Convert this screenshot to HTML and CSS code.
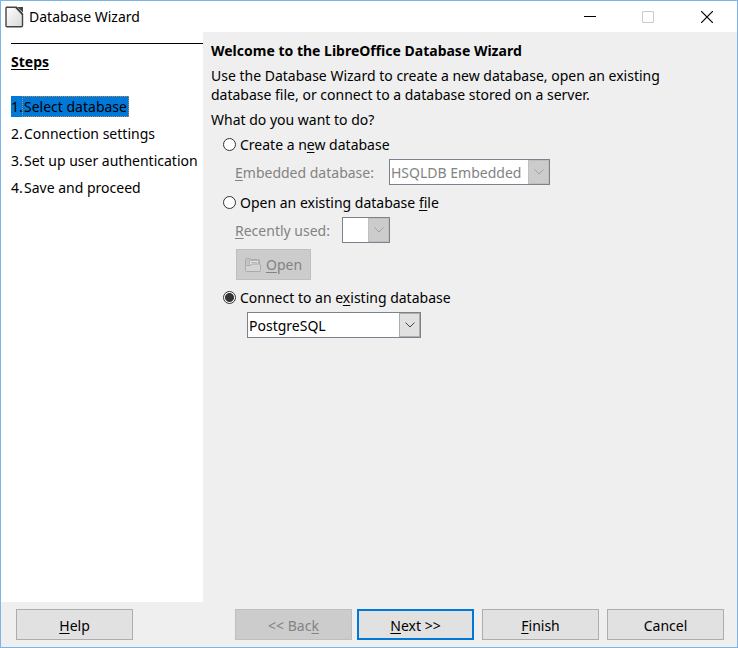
FILE: index.html
```html
<!DOCTYPE html>
<html lang="en">
<head>
<meta charset="utf-8">
<title>Database Wizard</title>
<link rel="stylesheet" href="styles.css">
</head>
<body>
<div class="window">
  <header class="titlebar">
    <svg class="app-icon" width="20" height="22" viewBox="0 0 20 22" aria-hidden="true">
      <defs><linearGradient id="page" x1="0" y1="0" x2="1" y2="1"><stop offset="0" stop-color="#fff"/><stop offset="1" stop-color="#d8d8d8"/></linearGradient></defs>
      <path d="M1.800 1.200h9.700l6 6.800v11.700q0 1-1 1H2q-1 0-1-1V2q0-.8.8-.8z" fill="url(#page)" stroke="#444" stroke-width="1.400"/>
      <path d="M12.500 1H18v5.500z" fill="#444"/>
      <path d="M11 1.500l6.500 7" stroke="#444" stroke-width="1.800"/>
    </svg>
    <h1 class="title">Database Wizard</h1>
    <button class="caption" type="button" aria-label="Minimize"><svg width="12" height="12" viewBox="0 0 12 12"><path d="M0 5.500h12" stroke="#000"/></svg></button>
    <button class="caption" type="button" aria-label="Maximize" disabled><svg width="12" height="12" viewBox="0 0 12 12"><path d="M.5.5h11v11H.5z" fill="none" stroke="#ccc"/></svg></button>
    <button class="caption" type="button" aria-label="Close"><svg width="12" height="12" viewBox="0 0 12 12"><path d="M0 0l12 12M12 0L0 12" stroke="#000" stroke-width="1.200"/></svg></button>
  </header>

  <div class="body">
    <nav class="sidebar" aria-labelledby="steps-title">
      <h2 class="steps-title" id="steps-title">Steps</h2>
      <ol class="steps">
        <li><a class="step current" href="#select" aria-current="step"><span class="number">1.</span><span class="name">Select database</span></a></li>
        <li><a class="step" href="#connection"><span class="number">2.</span><span class="name">Connection settings</span></a></li>
        <li><a class="step" href="#authentication"><span class="number">3.</span><span class="name">Set up user authentication</span></a></li>
        <li><a class="step" href="#save"><span class="number">4.</span><span class="name">Save and proceed</span></a></li>
      </ol>
    </nav>

    <main class="content">
      <h2 class="heading">Welcome to the LibreOffice Database Wizard</h2>
      <p class="intro">Use the Database Wizard to create a new database, open an existing database file, or connect to a database stored on a server.</p>
      <p class="question" id="question">What do you want to do?</p>
      <div class="options" role="radiogroup" aria-labelledby="question">
        <section class="option">
          <label class="choice"><input type="radio" name="mode"><span>Create a n<u>e</u>w database</span></label>
          <div class="field">
            <label class="muted embedded-label" for="embedded"><u>E</u>mbedded database:</label>
            <span class="combo combo-embedded disabled">
              <select id="embedded" disabled><option>HSQLDB Embedded</option></select>
              <span class="arrow"><svg width="10" height="6" viewBox="0 0 10 6"><path d="M.5.5L5 5 9.500.5"/></svg></span>
            </span>
          </div>
        </section>
        <section class="option">
          <label class="choice"><input type="radio" name="mode"><span>Open an existing database <u>f</u>ile</span></label>
          <div class="field">
            <label class="muted recent-label" for="recent"><u>R</u>ecently used:</label>
            <span class="combo combo-recent disabled">
              <select id="recent" disabled><option></option></select>
              <span class="arrow"><svg width="10" height="6" viewBox="0 0 10 6"><path d="M.5.5L5 5 9.500.5"/></svg></span>
            </span>
          </div>
          <button class="button open" type="button" disabled>
            <svg width="16" height="16" viewBox="0 0 16 16" fill="none" stroke="#aaa" aria-hidden="true">
              <path d="M.5 13V2.500q0-1 1-1h3q1 0 1 1h8q1 0 1 1V8" fill="#c4c4c4"/>
              <path d="M4.500 8.500V3.500h9V8" fill="#e2e2e2" stroke="#b4b4b4"/>
              <path d="M6 5.500h6" stroke="#b4b4b4"/>
              <path d="M1.500 8.500h4l1.500-1.500h7.500q1 0 1 1v5.500q0 1-1 1h-13q-1 0-1-1v-4q0-1 1-1z" fill="#d4d4d4"/>
            </svg>
            <span><u>O</u>pen</span>
          </button>
        </section>
        <section class="option">
          <label class="choice"><input type="radio" name="mode" checked><span>Connect to an e<u>x</u>isting database</span></label>
          <div class="field indented">
            <span class="combo combo-type">
              <select id="type" aria-label="Database type"><option>PostgreSQL</option></select>
              <span class="arrow"><svg width="10" height="6" viewBox="0 0 10 6"><path d="M.5.5L5 5 9.500.5"/></svg></span>
            </span>
          </div>
        </section>
      </div>
    </main>
  </div>

  <footer class="footer">
    <button class="button help" type="button"><span><u>H</u>elp</span></button>
    <div class="pair">
      <button class="button" type="button" disabled><span>&lt;&lt; Bac<u>k</u></span></button>
      <button class="button default" type="button"><span><u>N</u>ext &gt;&gt;</span></button>
    </div>
    <button class="button" type="button"><span><u>F</u>inish</span></button>
    <button class="button" type="button"><span>Cancel</span></button>
  </footer>
</div>
</body>
</html>
```
FILE: styles.css
```css
* { box-sizing: border-box; }

body {
  margin: 0;
  background: #efefef;
  color: #000;
  font: 14px/19px "Noto Sans", "Open Sans", sans-serif;
}

h1, h2, p, ol { margin: 0; padding: 0; font-size: inherit; }
button, select { font: inherit; color: inherit; }
svg { display: block; flex: none; }
u { text-underline-offset: 2px; text-decoration-thickness: 1px; text-decoration-skip-ink: none; }

.window {
  display: flex;
  flex-direction: column;
  min-height: 100vh;
  border: 1px solid #7eb4ea;
}

.titlebar {
  display: flex;
  align-items: center;
  height: 31px;
  padding-left: 4px;
  background: #fff;
}
.title { flex: 1; margin-left: 4px; font-weight: 400; }
.caption {
  display: grid;
  place-items: center;
  width: 58px;
  height: 30px;
  padding: 0;
  border: 0;
  background: none;
}
.caption:last-child { width: 60px; }

.body { display: flex; flex: 1; }

.sidebar {
  flex: none;
  width: 202px;
  padding: 11px 0 0 10px;
  background: #fff;
}
.steps-title {
  padding-top: 8px;
  border-top: 1px solid #000;
  font-weight: 700;
  text-decoration: underline;
  text-underline-offset: 2px;
}
.steps {
  display: flex;
  flex-direction: column;
  gap: 6px;
  margin-top: 25px;
  list-style: none;
}
.step {
  display: inline-flex;
  color: #000;
  text-decoration: none;
  vertical-align: top;
  white-space: nowrap;
}
.number { width: 11px; padding: 1px 0; }
.name { padding: 0 1px; border: 1px solid transparent; }
.current { background: #0078d7; }
.current .name { border: 1px dotted #c08a50; }

.content { flex: 1; min-width: 0; padding: 9px 60px 8px 8px; }
.heading { font-weight: 700; }
.intro, .question { margin-top: 6px; }

.options {
  display: flex;
  flex-direction: column;
  gap: 8px;
  margin-top: 6px;
  padding-left: 12px;
}
.option { display: flex; flex-direction: column; align-items: flex-start; gap: 5px; }
.choice { display: flex; align-items: center; gap: 4px; }
.choice input {
  appearance: none;
  width: 13px;
  height: 13px;
  margin: 0;
  border: 1px solid #333;
  border-radius: 50%;
  background: #fff;
}
.choice input:checked { background: radial-gradient(circle, #333 4px, #fff 5px); }

.field { display: flex; align-items: center; padding-left: 12px; }
.indented { padding-left: 24px; }
.muted { color: #838383; }
.embedded-label { width: 154px; }
.recent-label { width: 107px; }

.combo {
  display: grid;
  grid-template-columns: 1fr 21px;
  height: 26px;
  border: 1px solid #7a828e;
  background: #fff;
}
.combo select {
  grid-area: 1 / 1 / 2 / 3;
  appearance: none;
  min-width: 0;
  padding: 0 21px 0 1px;
  border: 0;
  border-radius: 0;
  background: none;
}
.combo select:disabled { color: #838383; opacity: 1; }
.arrow {
  display: grid;
  grid-area: 1 / 2;
  place-items: center;
  border: 1px solid #adadad;
  background: #e1e1e1;
  pointer-events: none;
}
.arrow path { fill: none; stroke: #444; }
.disabled .arrow { border-color: #bfbfbf; background: #ccc; }
.disabled .arrow path { stroke: #a0a0a0; }
.combo-embedded { width: 161px; }
.combo-recent { width: 48px; }
.combo-type { width: 174px; }

.button {
  display: flex;
  align-items: center;
  justify-content: center;
  width: 117px;
  height: 31px;
  padding: 2px 0 0;
  border: 1px solid #adadad;
  background: #e1e1e1;
}
.button:disabled { border-color: #bfbfbf; background: #ccc; color: #838383; }
.default { border: 2px solid #0078d7; }
.open { gap: 5px; width: 75px; margin: 1px 0 0 13px; padding: 0; }

.footer {
  display: flex;
  align-items: center;
  gap: 8px;
  height: 45px;
  padding: 0 13px 0 15px;
}
.help { margin-right: auto; }
.pair { display: flex; gap: 5px; }
```
